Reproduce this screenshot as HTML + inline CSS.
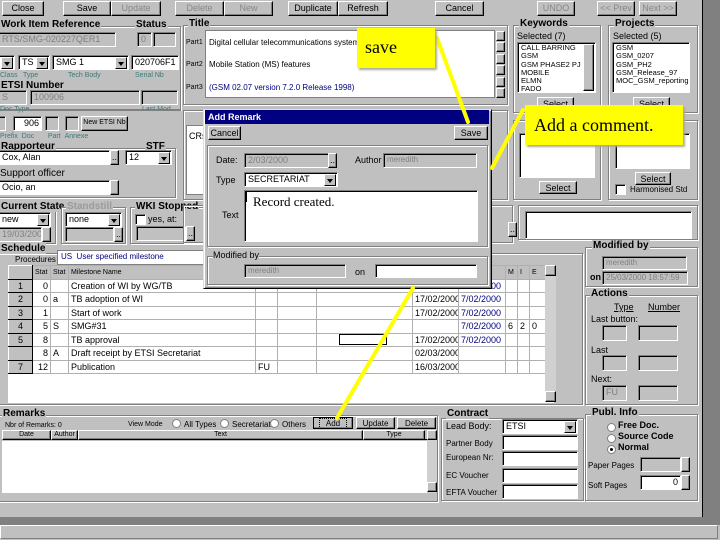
<!DOCTYPE html>
<html><head><meta charset="utf-8"><style>
*{box-sizing:border-box;margin:0;padding:0}
body{width:720px;height:540px;background:#c0c0c0;position:relative;overflow:hidden;font-family:"Liberation Sans",sans-serif;font-size:9px;color:#000}
div,span{position:absolute}
.b{background:#c0c0c0;border:1px solid;border-color:#fff #000 #000 #fff;box-shadow:inset -1px -1px 0 #808080;text-align:center;line-height:12px;font-size:9px}
.dis{color:#888}
.w{background:#fff;border:1px solid;border-color:#808080 #fff #fff #808080;box-shadow:inset 1px 1px 0 #000;padding-left:3px;line-height:12px;white-space:nowrap;overflow:hidden;font-size:9px}
.gw{background:#c0c0c0;color:#808080}
.g{border:1px solid #808080;box-shadow:1px 1px 0 #fff,inset 1px 1px 0 #fff}
.l{white-space:nowrap;line-height:11px;font-size:9px}
.bl{font-weight:bold;font-size:10px;background:#c0c0c0;padding:0 1px}
.s{font-size:7px;color:#3a7a7a}
.dd{width:12px;height:12px;top:1px;right:1px;border:1px solid;border-color:#fff #000 #000 #fff;background:#c0c0c0}
.dd:after{content:"";position:absolute;left:2px;top:4px;border:3px solid transparent;border-top:4px solid #000}
.r{background:#fff;border:1px solid #808080;border-radius:50%;width:9px;height:9px}
.y{background:#ffff00;font-family:"Liberation Serif",serif;box-shadow:2px 2px 2px #aa9}
table{border-collapse:collapse}
.tb td{border:1px solid #b0b0b0;height:13.5px;font-size:9px;padding:0 2px;white-space:nowrap;overflow:hidden}
.rn{background:#c0c0c0;border:1px solid;border-color:#fff #000 #000 #fff !important;text-align:center}
</style></head><body>
<div style="left:702px;top:0;width:18px;height:517px;background:#808080;border-left:1px solid #000"></div>
<div style="left:0;top:517px;width:720px;height:8px;background:#808080"></div>
<div style="left:0;top:525px;width:718px;height:14px;border:1px solid;border-color:#fff #808080 #808080 #fff"></div>

<div class="b" style="left:2px;top:1px;width:42px;height:15px">Close</div>
<div class="b" style="left:63px;top:1px;width:48px;height:15px">Save</div>
<div class="b dis" style="left:111px;top:1px;width:50px;height:15px">Update</div>
<div class="b dis" style="left:175px;top:1px;width:49px;height:15px">Delete</div>
<div class="b dis" style="left:224px;top:1px;width:49px;height:15px">New</div>
<div class="b" style="left:288px;top:1px;width:50px;height:15px">Duplicate</div>
<div class="b" style="left:338px;top:1px;width:50px;height:15px">Refresh</div>
<div class="b" style="left:435px;top:1px;width:49px;height:15px">Cancel</div>
<div class="b dis" style="left:537px;top:1px;width:38px;height:15px">UNDO</div>
<div class="b dis" style="left:597px;top:1px;width:38px;height:15px">&lt;&lt; Prev</div>
<div class="b dis" style="left:639px;top:1px;width:38px;height:15px">Next &gt;&gt;</div>

<div class="g" style="left:-2px;top:26px;width:183px;height:84px"></div>
<div class="l bl" style="left:0;top:19px">Work Item Reference</div>
<div class="l bl" style="left:135px;top:19px">Status</div>
<div class="w gw" style="left:-2px;top:32px;width:118px;height:15px">RTS/SMG-020227QER1</div>
<div class="w gw" style="left:137px;top:32px;width:15px;height:15px">0</div>
<div class="w gw" style="left:153px;top:32px;width:23px;height:15px"></div>
<div class="w" style="left:-2px;top:55px;width:17px;height:15px">R<div class="dd"></div></div>
<div class="w" style="left:18px;top:55px;width:32px;height:15px">TS<div class="dd"></div></div>
<div class="w" style="left:52px;top:55px;width:77px;height:15px">SMG 1<div class="dd"></div></div>
<div class="w" style="left:131px;top:55px;width:48px;height:15px">020706F1</div>
<div class="l s" style="left:0;top:70px">Class</div><div class="l s" style="left:23px;top:70px">Type</div><div class="l s" style="left:68px;top:70px">Tech Body</div><div class="l s" style="left:135px;top:70px">Serial Nb</div>
<div class="l bl" style="left:0;top:80px">ETSI Number</div>
<div class="w gw" style="left:-2px;top:90px;width:29px;height:15px">S</div>
<div class="w gw" style="left:30px;top:90px;width:110px;height:15px">100906</div>
<div class="w gw" style="left:141px;top:90px;width:37px;height:15px"></div>
<div class="l s" style="left:0;top:104px">Doc Type</div><div class="l s" style="left:142px;top:104px">Last Mod</div>
<div style="left:-2px;top:110px;width:183px;height:1px;background:#808080"></div>
<div class="w gw" style="left:-2px;top:116px;width:8px;height:15px"></div>
<div class="w" style="left:13px;top:116px;width:29px;height:15px;text-align:right;padding-right:2px">906</div>
<div class="w gw" style="left:45px;top:116px;width:14px;height:15px"></div>
<div class="w gw" style="left:65px;top:116px;width:14px;height:15px"></div>
<div class="b" style="left:81px;top:116px;width:47px;height:15px;font-size:7px">New ETSI Nb</div>
<div class="l s" style="left:0;top:131px">Prefix &nbsp;Doc &nbsp; &nbsp; &nbsp; Part &nbsp;Annexe</div>
<div class="g" style="left:-2px;top:148px;width:178px;height:50px"></div>
<div class="l bl" style="left:0;top:141px">Rapporteur</div>
<div class="l bl" style="left:145px;top:141px">STF</div>
<div class="w" style="left:-2px;top:150px;width:112px;height:15px">Cox, Alan</div>
<div class="b" style="left:110px;top:150px;width:9px;height:15px">..</div>
<div class="w" style="left:125px;top:150px;width:47px;height:15px">12<div class="dd"></div></div>
<div class="l" style="left:0;top:168px;font-size:10px">Support officer</div>
<div class="w" style="left:-2px;top:180px;width:112px;height:15px">Ocio, an</div>
<div class="b" style="left:110px;top:180px;width:9px;height:15px"></div>
<div class="g" style="left:-2px;top:207px;width:58px;height:37px"></div>
<div class="l bl" style="left:0;top:201px">Current State</div>
<div class="g" style="left:61px;top:207px;width:65px;height:37px"></div>
<div class="l bl" style="left:66px;top:201px;color:#9a9a9a">Standstill</div>
<div class="g" style="left:130px;top:207px;width:75px;height:37px"></div>
<div class="l bl" style="left:135px;top:201px">WKI Stopped</div>
<div class="w" style="left:-2px;top:212px;width:53px;height:15px">new<div class="dd"></div></div>
<div class="w gw" style="left:-2px;top:227px;width:44px;height:15px">19/03/2000</div>
<div class="b" style="left:42px;top:227px;width:9px;height:15px"></div>
<div class="w" style="left:65px;top:212px;width:57px;height:15px">none<div class="dd"></div></div>
<div class="w gw" style="left:65px;top:227px;width:49px;height:15px"></div>
<div class="b" style="left:114px;top:227px;width:9px;height:15px">..</div>
<div class="w" style="left:135px;top:214px;width:11px;height:11px;padding:0"></div>
<div class="l" style="left:148px;top:214px">yes, at:</div>
<div class="w gw" style="left:136px;top:226px;width:50px;height:15px"></div>
<div class="b" style="left:186px;top:226px;width:9px;height:15px">..</div>

<div class="g" style="left:183px;top:25px;width:325px;height:80px"></div>
<div class="l bl" style="left:188px;top:18px">Title</div>
<div class="l" style="left:186px;top:37px;font-size:7px">Part1</div>
<div class="l" style="left:186px;top:59px;font-size:7px">Part2</div>
<div class="l" style="left:186px;top:82px;font-size:7px">Part3</div>
<div class="w" style="left:205px;top:30px;width:290px;height:68px;box-shadow:none;border-color:#808080"></div>
<div class="l" style="left:209px;top:37px;font-size:8px">Digital cellular telecommunications system</div>
<div class="l" style="left:209px;top:59px;font-size:8px">Mobile Station (MS) features</div>
<div class="l" style="left:209px;top:82px;font-size:8px;color:#000080">(GSM 02.07 version 7.2.0 Release 1998)</div>
<div class="b" style="left:496px;top:31px;width:9px;height:10px"></div><div class="b" style="left:496px;top:42px;width:9px;height:10px"></div>
<div class="b" style="left:496px;top:54px;width:9px;height:10px"></div><div class="b" style="left:496px;top:65px;width:9px;height:10px"></div>
<div class="b" style="left:496px;top:77px;width:9px;height:10px"></div><div class="b" style="left:496px;top:88px;width:9px;height:10px"></div>

<div class="g" style="left:183px;top:110px;width:325px;height:90px"></div>
<div class="w" style="left:186px;top:125px;width:300px;height:70px;box-shadow:none;border-color:#808080"></div>
<div class="l" style="left:189px;top:131px">CRs</div>
<div class="g" style="left:183px;top:205px;width:330px;height:38px"></div>
<div class="b" style="left:508px;top:222px;width:9px;height:15px">..</div>

<div class="g" style="left:513px;top:25px;width:88px;height:88px"></div>
<div class="l bl" style="left:519px;top:18px">Keywords</div>
<div class="l" style="left:517px;top:31px">Selected (7)</div>
<div class="w" style="left:517px;top:42px;width:79px;height:51px;font-size:7.5px;line-height:8.3px;padding-top:1px">CALL BARRING<br>GSM<br>GSM PHASE2 PJ<br>MOBILE<br>ELMN<br>FADO</div>
<div class="b" style="left:583px;top:44px;width:11px;height:47px"></div>
<div class="b" style="left:537px;top:97px;width:37px;height:12px">Select</div>
<div class="g" style="left:608px;top:25px;width:90px;height:88px"></div>
<div class="l bl" style="left:614px;top:18px">Projects</div>
<div class="l" style="left:613px;top:31px">Selected (5)</div>
<div class="w" style="left:612px;top:42px;width:78px;height:51px;font-size:7.5px;line-height:8.3px;padding-top:1px">GSM<br>GSM_0207<br>GSM_PH2<br>GSM_Release_97<br>MOC_GSM_reporting</div>
<div class="b" style="left:633px;top:97px;width:37px;height:12px">Select</div>
<div class="g" style="left:513px;top:120px;width:88px;height:80px"></div>
<div class="w" style="left:519px;top:133px;width:76px;height:45px"></div>
<div class="b" style="left:539px;top:181px;width:38px;height:13px">Select</div>
<div class="g" style="left:608px;top:120px;width:90px;height:80px"></div>
<div class="w" style="left:615px;top:133px;width:75px;height:36px"></div>
<div class="b" style="left:635px;top:172px;width:36px;height:13px">Select</div>
<div class="w" style="left:615px;top:184px;width:11px;height:11px;padding:0"></div>
<div class="l" style="left:630px;top:184px;font-size:8px">Harmonised Std</div>
<div class="g" style="left:518px;top:205px;width:180px;height:35px"></div>
<div class="w" style="left:525px;top:211px;width:167px;height:28px"></div>

<div class="g" style="left:585px;top:247px;width:113px;height:40px"></div>
<div class="l bl" style="left:592px;top:240px">Modified by</div>
<div class="w gw" style="left:602px;top:256px;width:85px;height:14px;font-size:8px">meredith</div>
<div class="l" style="left:590px;top:272px;font-weight:bold">on</div>
<div class="w gw" style="left:602px;top:271px;width:86px;height:14px;font-size:8px">25/03/2000 18:57:59</div>
<div class="g" style="left:585px;top:295px;width:113px;height:110px"></div>
<div class="l bl" style="left:590px;top:288px">Actions</div>
<div class="l" style="left:614px;top:302px;text-decoration:underline">Type</div>
<div class="l" style="left:648px;top:302px;text-decoration:underline">Number</div>
<div class="l" style="left:591px;top:314px">Last button:</div>
<div class="w gw" style="left:602px;top:325px;width:25px;height:16px"></div><div class="w gw" style="left:638px;top:325px;width:40px;height:16px"></div>
<div class="l" style="left:591px;top:345px">Last</div>
<div class="w gw" style="left:602px;top:355px;width:25px;height:16px"></div><div class="w gw" style="left:638px;top:355px;width:40px;height:16px"></div>
<div class="l" style="left:591px;top:374px">Next:</div>
<div class="w gw" style="left:602px;top:385px;width:25px;height:16px">FU</div><div class="w gw" style="left:638px;top:385px;width:40px;height:16px"></div>

<div class="g" style="left:-2px;top:253px;width:585px;height:152px"></div>
<div class="l bl" style="left:0;top:243px">Schedule</div>
<div class="l" style="left:15px;top:254px;font-size:8px">Procedures</div>
<div class="w" style="left:57px;top:250px;width:148px;height:15px;color:#000080;font-size:8px;box-shadow:none;border-color:#808080">US&nbsp; User specified milestone</div>
<div style="left:8px;top:265px;width:546px;height:138px;background:#fff"></div>
<table class="tb" style="position:absolute;left:8px;top:265px;width:537px;table-layout:fixed">
<colgroup><col style="width:24px"><col style="width:18px"><col style="width:18px"><col style="width:187px"><col style="width:22px"><col style="width:39px"><col style="width:96px"><col style="width:46px"><col style="width:47px"><col style="width:12px"><col style="width:12px"><col style="width:16px"></colgroup>
<tr style="background:#c0c0c0"><td class="rn" style="height:6px;font-size:7px"></td><td style="font-size:7px">Stat</td><td style="font-size:7px">Stat</td><td style="font-size:7px">Milestone Name</td><td></td><td></td><td></td><td></td><td></td><td style="font-size:7px">M</td><td style="font-size:7px">I</td><td style="font-size:7px">E</td></tr>
<tr><td class="rn">1</td><td style="text-align:right">0</td><td></td><td>Creation of WI by WG/TB</td><td></td><td></td><td></td><td></td><td style="color:#000080">7/02/2000</td><td></td><td></td><td></td></tr>
<tr><td class="rn">2</td><td style="text-align:right">0</td><td>a</td><td>TB adoption of WI</td><td></td><td></td><td></td><td>17/02/2000</td><td style="color:#000080">7/02/2000</td><td></td><td></td><td></td></tr>
<tr><td class="rn">3</td><td style="text-align:right">1</td><td></td><td>Start of work</td><td></td><td></td><td></td><td>17/02/2000</td><td style="color:#000080">7/02/2000</td><td></td><td></td><td></td></tr>
<tr><td class="rn">4</td><td style="text-align:right">5</td><td>S</td><td>SMG#31</td><td></td><td></td><td></td><td></td><td style="color:#000080">7/02/2000</td><td>6</td><td>2</td><td>0</td></tr>
<tr><td class="rn">5</td><td style="text-align:right">8</td><td></td><td>TB approval</td><td></td><td></td><td><div style="position:relative;border:1px solid #000;height:11px;width:48px;left:20px"></div></td><td>17/02/2000</td><td style="color:#000080">7/02/2000</td><td></td><td></td><td></td></tr>
<tr><td class="rn"></td><td style="text-align:right">8</td><td>A</td><td>Draft receipt by ETSI Secretariat</td><td></td><td></td><td></td><td>02/03/2000</td><td></td><td></td><td></td><td></td></tr>
<tr><td class="rn">7</td><td style="text-align:right">12</td><td></td><td>Publication</td><td>FU</td><td></td><td></td><td>16/03/2000</td><td></td><td></td><td></td><td></td></tr>
</table>
<div style="left:545px;top:265px;width:11px;height:137px;background:#d0d0d0"></div>
<div class="b" style="left:545px;top:265px;width:11px;height:11px"></div>
<div class="b" style="left:545px;top:391px;width:11px;height:11px"></div>

<div class="g" style="left:-2px;top:415px;width:440px;height:87px"></div>
<div class="l bl" style="left:2px;top:408px">Remarks</div>
<div class="l" style="left:5px;top:420px;font-size:7px">Nbr of Remarks: 0</div>
<div class="l" style="left:128px;top:419px;font-size:7px">View Mode</div>
<div class="r" style="left:172px;top:419px"></div><div class="l" style="left:184px;top:419px;font-size:8px">All Types</div>
<div class="r" style="left:220px;top:419px"></div><div class="l" style="left:232px;top:419px;font-size:8px">Secretariat</div>
<div class="r" style="left:270px;top:419px"></div><div class="l" style="left:282px;top:419px;font-size:8px">Others</div>
<div class="b" style="left:313px;top:417px;width:40px;height:12px;border-color:#000;font-size:8px"><span style="position:static;outline:1px dotted #000;padding:0 6px">Add</span></div>
<div class="b" style="left:356px;top:417px;width:39px;height:12px;font-size:8px">Update</div>
<div class="b" style="left:397px;top:417px;width:39px;height:12px;font-size:8px">Delete</div>
<div style="left:2px;top:430px;width:425px;height:10px;background:#c0c0c0;border-bottom:1px solid #000"></div>
<div class="b" style="left:2px;top:430px;width:49px;height:10px;font-size:7px;line-height:8px">Date</div>
<div class="b" style="left:51px;top:430px;width:27px;height:10px;font-size:7px;line-height:8px">Author</div>
<div class="b" style="left:78px;top:430px;width:285px;height:10px;font-size:7px;line-height:8px">Text</div>
<div class="b" style="left:363px;top:430px;width:62px;height:10px;font-size:7px;line-height:8px">Type</div>
<div style="left:2px;top:441px;width:425px;height:52px;background:#fff"></div>
<div style="left:427px;top:430px;width:10px;height:63px;background:#d0d0d0"></div>
<div class="b" style="left:427px;top:430px;width:10px;height:10px"></div>
<div class="b" style="left:427px;top:482px;width:10px;height:10px"></div>

<div class="g" style="left:441px;top:418px;width:143px;height:83px"></div>
<div class="l bl" style="left:446px;top:408px">Contract</div>
<div class="l" style="left:446px;top:421px">Lead Body:</div>
<div class="w" style="left:502px;top:419px;width:76px;height:15px">ETSI<div class="dd"></div></div>
<div class="l" style="left:446px;top:438px;font-size:8px">Partner Body</div>
<div class="l" style="left:446px;top:452px;font-size:8px">European Nr:</div>
<div class="l" style="left:446px;top:470px;font-size:8px">EC Voucher</div>
<div class="l" style="left:446px;top:487px;font-size:8px">EFTA Voucher</div>
<div class="w" style="left:502px;top:435px;width:76px;height:15px"></div>
<div class="w" style="left:502px;top:451px;width:76px;height:15px"></div>
<div class="w" style="left:502px;top:468px;width:76px;height:15px"></div>
<div class="w" style="left:502px;top:484px;width:76px;height:15px"></div>

<div class="g" style="left:585px;top:414px;width:113px;height:87px"></div>
<div class="l bl" style="left:591px;top:407px">Publ. Info</div>
<div class="r" style="left:607px;top:423px"></div><div class="l" style="left:618px;top:420px;font-weight:bold">Free Doc.</div>
<div class="r" style="left:607px;top:434px"></div><div class="l" style="left:618px;top:431px;font-weight:bold">Source Code</div>
<div class="r" style="left:607px;top:445px"></div><div class="l" style="left:618px;top:442px;font-weight:bold">Normal</div>
<div style="left:610px;top:448px;width:3px;height:3px;background:#000;border-radius:50%"></div>
<div class="l" style="left:588px;top:460px;font-size:8px">Paper Pages</div>
<div class="w gw" style="left:640px;top:457px;width:41px;height:15px"></div><div class="b" style="left:681px;top:457px;width:9px;height:15px"></div>
<div class="l" style="left:588px;top:480px;font-size:8px">Soft Pages</div>
<div class="w" style="left:640px;top:475px;width:41px;height:15px;text-align:right;padding-right:2px">0</div><div class="b" style="left:681px;top:475px;width:9px;height:15px"></div>

<div style="left:203px;top:109px;width:289px;height:180px;background:#c0c0c0;border:1px solid;border-color:#dfdfdf #000 #000 #dfdfdf;box-shadow:inset 1px 1px 0 #fff,inset -1px -1px 0 #808080"></div>
<div style="left:205px;top:110px;width:284px;height:14px;background:#000080;color:#fff;font-weight:bold;font-size:9px;line-height:14px;padding-left:3px">Add Remark</div>
<div class="b" style="left:208px;top:126px;width:33px;height:14px">Cancel</div>
<div class="b" style="left:454px;top:126px;width:34px;height:14px">Save</div>
<div class="g" style="left:207px;top:145px;width:281px;height:102px"></div>
<div class="l" style="left:216px;top:155px">Date:</div>
<div class="w gw" style="left:244px;top:153px;width:86px;height:15px">2/03/2000</div>
<div class="b" style="left:328px;top:153px;width:9px;height:15px">..</div>
<div class="l" style="left:355px;top:155px">Author</div>
<div class="w gw" style="left:383px;top:153px;width:94px;height:15px;font-size:8px">meredith</div>
<div class="l" style="left:216px;top:175px">Type</div>
<div class="w" style="left:244px;top:172px;width:94px;height:15px">SECRETARIAT<div class="dd"></div></div>
<div class="l" style="left:222px;top:210px">Text</div>
<div class="w" style="left:244px;top:190px;width:234px;height:52px;font-family:'Liberation Serif',serif;font-size:13px;line-height:16px;padding:3px 0 0 8px">Record created.</div>
<div style="left:246px;top:192px;width:1px;height:10px;background:#000"></div>
<div class="g" style="left:207px;top:256px;width:281px;height:29px"></div>
<div class="l" style="left:213px;top:250px;background:#c0c0c0">Modified by</div>
<div class="w gw" style="left:244px;top:264px;width:102px;height:14px;font-size:8px">meredith</div>
<div class="l" style="left:355px;top:267px">on</div>
<div class="w" style="left:375px;top:264px;width:102px;height:14px"></div>

<svg style="position:absolute;left:0;top:0" width="720" height="540">
<g stroke="#ffff00" stroke-width="4" stroke-linecap="round">
<line x1="437" y1="38" x2="468" y2="122"/>
<line x1="523" y1="110" x2="492" y2="168"/>
<line x1="413" y1="288" x2="337" y2="418"/>
</g></svg>
<div class="y" style="left:357px;top:28px;width:78px;height:40px;font-size:18px;line-height:38px;padding-left:8px">save</div>
<div class="y" style="left:525px;top:105px;width:158px;height:40px;font-size:18px;line-height:40px;padding-left:9px">Add a comment.</div>
</body></html>
